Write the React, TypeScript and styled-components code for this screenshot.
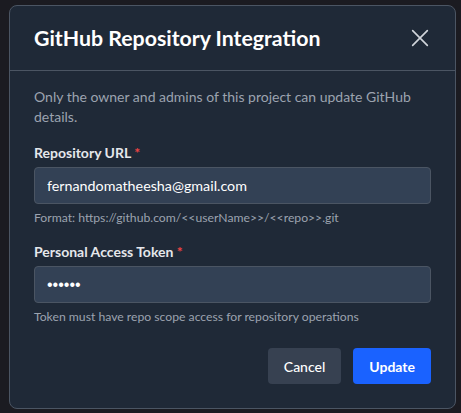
import { useState } from 'react'
import styled, { createGlobalStyle } from 'styled-components'

const GlobalStyle = createGlobalStyle`
  html, body {
    margin: 0;
    padding: 0;
    background: #1b1b21;
    font-family: Lato, "Noto Sans", sans-serif;
  }
  * {
    box-sizing: border-box;
  }
`

const Page = styled.div`
  width: 461px;
  height: 413px;
  padding: 5px 5px 0 9px;
  background: #1b1b21;
`

const Modal = styled.div`
  width: 447px;
  height: 404px;
  background: #1f2937;
  border: 1px solid #4b5563;
  border-radius: 8px;
  display: flex;
  flex-direction: column;
`

const Header = styled.div`
  display: flex;
  align-items: center;
  justify-content: space-between;
  padding: 18px 24px;
  border-bottom: 1px solid #4b5563;
`

const Title = styled.h2`
  margin: 0;
  font-size: 21.3px;
  line-height: 28px;
  font-weight: 700;
  color: #ffffff;
`

const CloseButton = styled.button`
  display: flex;
  align-items: center;
  justify-content: center;
  width: 24px;
  height: 24px;
  margin-right: -1px;
  padding: 0;
  border: none;
  background: none;
  color: #d1d5db;
  cursor: pointer;
`

const Body = styled.div`
  display: flex;
  flex-direction: column;
  gap: 16px;
  padding: 16px 24px 24px;
`

const Description = styled.p`
  margin: 0;
  font-size: 14px;
  line-height: 20px;
  color: #9ca3af;
`

const Field = styled.div`
  display: flex;
  flex-direction: column;
`

const Label = styled.label`
  font-size: 14px;
  line-height: 20px;
  font-weight: 700;
  color: #e5e7eb;
  margin-bottom: 4px;
`

const Required = styled.span`
  color: #ef4444;
`

const Input = styled.input<{ $masked?: boolean }>`
  height: 37px;
  width: 100%;
  padding: 0 12px;
  background: #334155;
  border: 1px solid #4b5563;
  border-radius: 4px;
  color: #ffffff;
  font-family: ${(p) => (p.$masked ? '"Liberation Sans", Arial, sans-serif' : 'inherit')};
  font-size: ${(p) => (p.$masked ? '16px' : '14.3px')};
  outline: none;
`

const Hint = styled.span`
  margin-top: 6px;
  font-size: 12.2px;
  line-height: 16px;
  color: #9ca3af;
`

const Footer = styled.div`
  display: flex;
  justify-content: flex-end;
  gap: 12px;
  margin-top: 7px;
`

const Button = styled.button<{ $primary?: boolean }>`
  height: 36px;
  padding: 0 16px;
  border: none;
  border-radius: 4px;
  font-family: inherit;
  font-size: 14px;
  font-weight: ${(p) => (p.$primary ? 700 : 500)};
  color: #ffffff;
  background: ${(p) => (p.$primary ? '#1a62ff' : '#374151')};
  cursor: pointer;
`

const App = () => {
  const [url, setUrl] = useState('fernandomatheesha@gmail.com')
  const [token, setToken] = useState('abcdef')

  return (
    <>
      <GlobalStyle />
      <Page>
        <Modal>
          <Header>
            <Title>GitHub Repository Integration</Title>
            <CloseButton aria-label="Close">
              <svg width="22" height="22" viewBox="0 0 24 24" fill="none" stroke="currentColor" strokeWidth="1.8" strokeLinecap="round">
                <path d="M4 4 20 20M20 4 4 20" />
              </svg>
            </CloseButton>
          </Header>
          <Body>
            <Description>
              Only the owner and admins of this project can update GitHub details.
            </Description>
            <Field>
              <Label>
                Repository URL <Required>*</Required>
              </Label>
              <Input value={url} onChange={(e) => setUrl(e.target.value)} />
              <Hint>Format: https://github.com/&lt;&lt;userName&gt;&gt;/&lt;&lt;repo&gt;&gt;.git</Hint>
            </Field>
            <Field>
              <Label>
                Personal Access Token <Required>*</Required>
              </Label>
              <Input $masked type="password" value={token} onChange={(e) => setToken(e.target.value)} />
              <Hint>Token must have repo scope access for repository operations</Hint>
            </Field>
            <Footer>
              <Button>Cancel</Button>
              <Button $primary>Update</Button>
            </Footer>
          </Body>
        </Modal>
      </Page>
    </>
  )
}

export default App
